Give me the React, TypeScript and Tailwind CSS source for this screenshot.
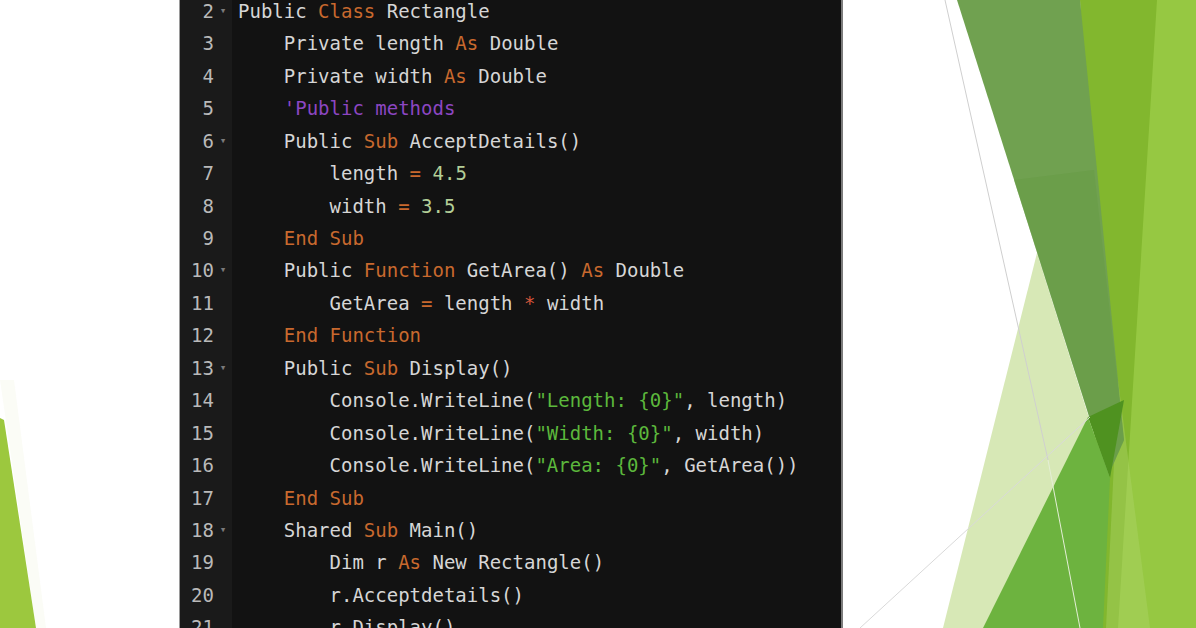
type Tok = [string, string];

const D = "text-[#d6d6d6]";
const K = "text-[#c8692e]";
const C = "text-[#8c46c2]";
const S = "text-[#5cb83c]";
const N = "text-[#b4cf98]";

type Line = { n: number; fold?: boolean; indent: number; toks: Tok[] };

const lines: Line[] = [
  { n: 2, fold: true, indent: 0, toks: [["Public ", D], ["Class", K], [" Rectangle", D]] },
  { n: 3, indent: 1, toks: [["Private length ", D], ["As", K], [" Double", D]] },
  { n: 4, indent: 1, toks: [["Private width ", D], ["As", K], [" Double", D]] },
  { n: 5, indent: 1, toks: [["'Public methods", C]] },
  { n: 6, fold: true, indent: 1, toks: [["Public ", D], ["Sub", K], [" AcceptDetails()", D]] },
  { n: 7, indent: 2, toks: [["length ", D], ["=", K], [" ", D], ["4.5", N]] },
  { n: 8, indent: 2, toks: [["width ", D], ["=", K], [" ", D], ["3.5", N]] },
  { n: 9, indent: 1, toks: [["End Sub", K]] },
  {
    n: 10,
    fold: true,
    indent: 1,
    toks: [["Public ", D], ["Function", K], [" GetArea() ", D], ["As", K], [" Double", D]],
  },
  { n: 11, indent: 2, toks: [["GetArea ", D], ["=", K], [" length ", D], ["*", "text-[#d2553a]"], [" width", D]] },
  { n: 12, indent: 1, toks: [["End Function", K]] },
  { n: 13, fold: true, indent: 1, toks: [["Public ", D], ["Sub", K], [" Display()", D]] },
  { n: 14, indent: 2, toks: [["Console.WriteLine(", D], ['"Length: {0}"', S], [", length)", D]] },
  { n: 15, indent: 2, toks: [["Console.WriteLine(", D], ['"Width: {0}"', S], [", width)", D]] },
  { n: 16, indent: 2, toks: [["Console.WriteLine(", D], ['"Area: {0}"', S], [", GetArea())", D]] },
  { n: 17, indent: 1, toks: [["End Sub", K]] },
  { n: 18, fold: true, indent: 1, toks: [["Shared ", D], ["Sub", K], [" Main()", D]] },
  { n: 19, indent: 2, toks: [["Dim r ", D], ["As", K], [" New Rectangle()", D]] },
  { n: 20, indent: 2, toks: [["r.Acceptdetails()", D]] },
  { n: 21, indent: 2, toks: [["r.Display()", D]] },
];

const CodeLine = ({ line }: { line: Line }) => (
  <div className="flex h-[32.44px] items-center">
    <div className="flex h-full w-[52px] shrink-0 items-center bg-[#1a1a1a]">
      <span className="w-[34px] text-right text-[#b9b9b9]">{line.n}</span>
      <span className="w-[18px] text-center text-[11px] text-[#7a7a7a]">
        {line.fold ? "▾" : ""}
      </span>
    </div>
    <div className="whitespace-pre pl-[6px]">
      {"    ".repeat(line.indent)}
      {line.toks.map(([t, cls], i) => (
        <span key={i} className={cls}>
          {t}
        </span>
      ))}
    </div>
  </div>
);

const LeftDecor = () => (
  <svg className="h-full w-full" viewBox="0 0 179 628" preserveAspectRatio="none">
    <polygon points="0,380 14,380 46,628 36,628" fill="#fbfcf6" />
    <polygon points="0,418 4,420 36,628 0,628" fill="#9cc83e" />
  </svg>
);

const RightDecor = () => (
  <svg className="h-full w-full" viewBox="843 0 353 628" preserveAspectRatio="none">
    <polygon points="1080,0 1196,0 1196,628 1100,628" fill="#82b72e" />
    <polygon points="1157,0 1196,0 1196,628 1118,628" fill="#96c842" />
    <polygon points="1118,380 1150,628 1106,628" fill="#aed46c" opacity="0.4" />
    <polygon points="1037,253 1096,440 1000,628 943,628" fill="#d7e8b6" />
    <polygon points="957,0 1080,0 1124,440 1108,476" fill="#70a150" />
    <polygon points="1014,180 1094,170 1124,440 1108,476" fill="#669c44" opacity="0.5" />
    <polygon points="1088,417 1124,400 1110,478" fill="#4f9220" />
    <polygon points="1088,417 1110,478 1103,628 983,628" fill="#6db33f" />
    <line x1="945" y1="0" x2="1048" y2="460" stroke="#cfcfcf" strokeWidth="1" />
    <line x1="1048" y1="460" x2="1080" y2="628" stroke="#e4eed6" strokeWidth="1" />
    <line x1="860" y1="628" x2="1090" y2="417" stroke="#d9d9d9" strokeWidth="1" />
  </svg>
);

export default function App() {
  return (
    <div className="flex h-[628px] w-[1196px] overflow-hidden bg-white">
      <div className="w-[179px] shrink-0">
        <LeftDecor />
      </div>
      <div className="w-[664px] shrink-0 overflow-hidden border-l border-r-2 border-l-[#9a9a9a] border-r-[#7c7c7c] bg-[#121212] font-['DejaVu_Sans_Mono',monospace] text-[19px]">
        <div className="-mt-[5px]">
          {lines.map((l) => (
            <CodeLine key={l.n} line={l} />
          ))}
        </div>
      </div>
      <div className="flex-1">
        <RightDecor />
      </div>
    </div>
  );
}
